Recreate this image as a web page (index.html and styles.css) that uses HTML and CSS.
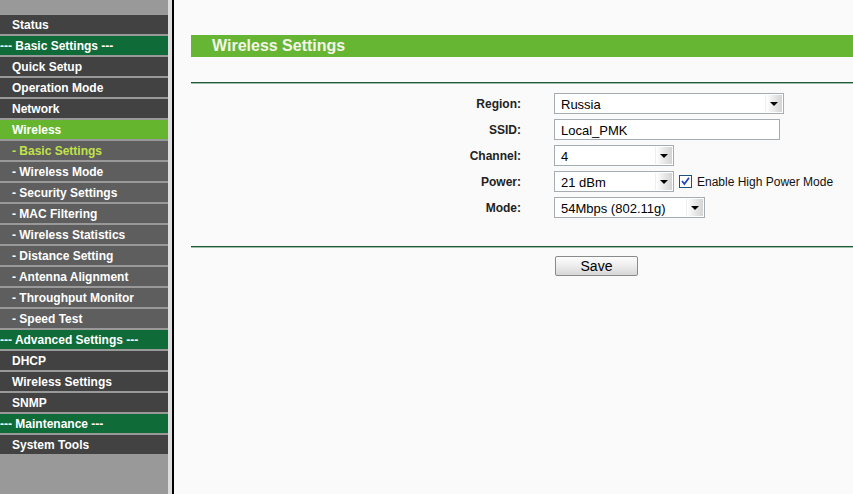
FILE: index.html
```html
<!DOCTYPE html>
<html>
<head>
<meta charset="utf-8">
<link rel="stylesheet" href="styles.css">
</head>
<body>
<div class="layout">
  <nav class="sidebar">
    <div class="item main">Status</div>
    <div class="item head">--- Basic Settings ---</div>
    <div class="item main">Quick Setup</div>
    <div class="item main">Operation Mode</div>
    <div class="item main">Network</div>
    <div class="item active">Wireless</div>
    <div class="item sub current">- Basic Settings</div>
    <div class="item sub">- Wireless Mode</div>
    <div class="item sub">- Security Settings</div>
    <div class="item sub">- MAC Filtering</div>
    <div class="item sub">- Wireless Statistics</div>
    <div class="item sub">- Distance Setting</div>
    <div class="item sub">- Antenna Alignment</div>
    <div class="item sub">- Throughput Monitor</div>
    <div class="item sub">- Speed Test</div>
    <div class="item head">--- Advanced Settings ---</div>
    <div class="item main">DHCP</div>
    <div class="item main">Wireless Settings</div>
    <div class="item main">SNMP</div>
    <div class="item head">--- Maintenance ---</div>
    <div class="item main">System Tools</div>
  </nav>
  <div class="divider"></div>
  <main class="content">
    <div class="title">Wireless Settings</div>
    <div class="rule rule-top"></div>
    <div class="form">
      <div class="label">Region:</div>
      <div class="field">
        <div class="select w-region"><span class="val">Russia</span><span class="arrow"><i></i></span></div>
      </div>
      <div class="label">SSID:</div>
      <div class="field">
        <div class="input w-ssid">Local_PMK</div>
      </div>
      <div class="label">Channel:</div>
      <div class="field">
        <div class="select w-channel"><span class="val">4</span><span class="arrow"><i></i></span></div>
      </div>
      <div class="label">Power:</div>
      <div class="field">
        <div class="select w-channel"><span class="val">21 dBm</span><span class="arrow"><i></i></span></div>
        <svg class="check" width="13" height="13" viewBox="0 0 13 13">
          <rect x="0.5" y="0.5" width="12" height="12" fill="#ffffff" stroke="#1c5180"/>
          <path d="M3 6 L5.4 9 L10 2.8" fill="none" stroke="#2349c4" stroke-width="1.8"/>
        </svg>
        <span class="check-label">Enable High Power Mode</span>
      </div>
      <div class="label">Mode:</div>
      <div class="field">
        <div class="select w-mode"><span class="val">54Mbps (802.11g)</span><span class="arrow"><i></i></span></div>
      </div>
    </div>
    <div class="rule rule-bottom"></div>
    <div class="actions">
      <button class="btn">Save</button>
    </div>
  </main>
</div>
</body>
</html>
```

FILE: styles.css
```css
html, body {
  margin: 0;
  padding: 0;
  height: 100%;
  overflow: hidden;
}
body {
  font-family: "Liberation Sans", Arial, sans-serif;
  background: #fafafa;
}
.layout {
  display: flex;
  height: 494px;
}
.sidebar {
  width: 168px;
  flex: 0 0 168px;
  background: #999999;
  padding-top: 15px;
  box-sizing: border-box;
}
.item {
  height: 19px;
  line-height: 20px;
  margin-bottom: 2px;
  font-size: 12px;
  font-weight: bold;
  color: #ffffff;
  padding-left: 12px;
  white-space: nowrap;
}
.item.main { background: #424242; }
.item.head { background: #0f6b38; padding-left: 0; }
.item.active { background: #66b52f; }
.item.sub { background: #5e5e5e; }
.item.sub.current { color: #c2e24a; }

.divider {
  flex: 0 0 2px;
  border-left: 4px solid #dcdcdc;
  background: #000000;
}
.content {
  flex: 1;
  background: #fafafa;
  padding-left: 17px;
  padding-top: 35px;
}
.title {
  height: 22px;
  line-height: 22px;
  background: #66b634;
  color: #f4f5ea;
  font-size: 16px;
  font-weight: bold;
  padding-left: 21px;
}
.rule {
  height: 1px;
  background: #1d5b3a;
  border-bottom: 1px solid #9fbfa9;
}
.rule-top { margin-top: 25px; }
.form {
  display: grid;
  grid-template-columns: 330px auto;
  grid-auto-rows: 21px;
  column-gap: 33px;
  row-gap: 5px;
  margin-top: 9px;
}
.label {
  text-align: right;
  line-height: 23px;
  font-size: 12px;
  font-weight: bold;
  color: #222222;
}
.field {
  display: flex;
  align-items: center;
}
.select, .input {
  box-sizing: border-box;
  height: 21px;
  border: 1px solid #a5acb2;
  background: #ffffff;
  font-size: 13px;
  color: #000000;
  display: flex;
  align-items: center;
  padding-top: 1px;
}
.input {
  padding-left: 6px;
}
.select .val {
  flex: 1;
  padding-left: 6px;
  white-space: nowrap;
}
.select .arrow {
  width: 16px;
  height: 17px;
  margin-right: 1px;
  margin-top: -1px;
  background: linear-gradient(to right, #ffffff, #e4e4e4 60%, #d4d4d4);
  border-left: 1px solid #eeeeee;
  display: flex;
  align-items: center;
  justify-content: center;
}
.select .arrow i {
  width: 0;
  height: 0;
  border-left: 4px solid transparent;
  border-right: 4px solid transparent;
  border-top: 4px solid #000000;
  margin-top: 1px;
}
.w-region { width: 230px; }
.w-ssid { width: 226px; }
.w-channel { width: 120px; }
.w-mode { width: 151px; }
.check {
  margin-left: 5px;
  display: block;
}
.check-label {
  margin-left: 5px;
  font-size: 12px;
  color: #111111;
}
.rule-bottom { margin-top: 28px; }
.actions {
  padding-left: 364px;
  margin-top: 8px;
}
.btn {
  width: 83px;
  height: 20px;
  border: 1px solid #8a8a8a;
  border-radius: 2px;
  background: linear-gradient(to bottom, #fdfdfd 0%, #ececec 50%, #d6d6d6 100%);
  font-family: "Liberation Sans", Arial, sans-serif;
  font-size: 14px;
  color: #000000;
  padding: 0;
  line-height: 18px;
}
```
